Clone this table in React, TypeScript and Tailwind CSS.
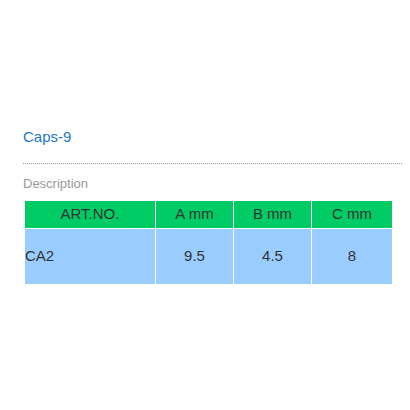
export default function App() {
    const cols = ["ART.NO.", "A mm", "B mm", "C mm"];
    const row = ["CA2", "9.5", "4.5", "8"];
    return (
        <div className="w-[410px] h-[410px] bg-white font-['Liberation_Sans',Arial,sans-serif]">
            <div className="pt-[127px] pl-[23px] pr-[8px]">
                <div className="text-[15px] leading-[20px] text-[#1f78c1]">Caps-9</div>
                <div className="mt-[16px] border-t border-dotted border-[#999]"></div>
                <div className="mt-[12px] text-[13px] leading-[15px] text-[#999]">Description</div>
                <table className="mt-[9px] ml-[1px] border-collapse text-[15px] text-[#333]">
                    <thead>
                        <tr className="bg-[#00cc66]">
                            {cols.map((c, i) => (
                                <th
                                    key={i}
                                    className={
                                        "h-[28px] p-0 border border-white font-normal text-center " +
                                        (i === 0 ? "w-[131px]" : i === 3 ? "w-[81px]" : "w-[78px]")
                                    }
                                >
                                    {c}
                                </th>
                            ))}
                        </tr>
                    </thead>
                    <tbody>
                        <tr className="bg-[#99ccff]">
                            {row.map((c, i) => (
                                <td
                                    key={i}
                                    className={"h-[56px] p-0 border border-white " + (i === 0 ? "text-left" : "text-center")}
                                >
                                    {c}
                                </td>
                            ))}
                        </tr>
                    </tbody>
                </table>
            </div>
        </div>
    )
}
